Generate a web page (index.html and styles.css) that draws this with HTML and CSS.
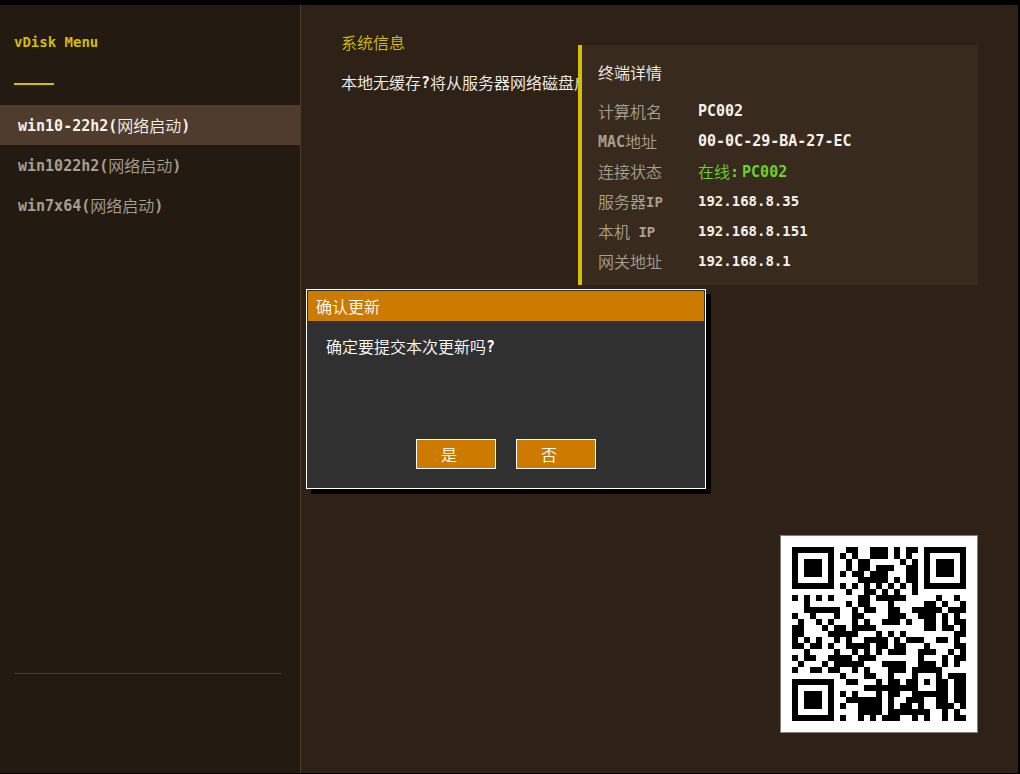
FILE: index.html
```html
<!DOCTYPE html>
<html lang="zh-CN">
<head>
<meta charset="utf-8">
<title>vDisk Menu</title>
<link rel="stylesheet" href="styles.css">
</head>
<body>
<div class="screen">
  <aside class="sidebar">
    <h1 class="brand latin narrow">vDisk Menu</h1>
    <div class="brand-rule"></div>
    <nav class="menu">
      <button class="menu-item active" type="button"><span class="latin">win10-22h2(</span>网络启动<span class="latin">)</span></button>
      <button class="menu-item" type="button"><span class="latin">win1022h2(</span>网络启动<span class="latin">)</span></button>
      <button class="menu-item" type="button"><span class="latin">win7x64(</span>网络启动<span class="latin">)</span></button>
    </nav>
    <hr class="divider">
  </aside>
  <main class="main">
    <div class="top">
      <section class="system">
        <h2 class="system-title">系统信息</h2>
        <p class="system-text">本地无缓存<span class="latin">?</span>将从服务器网络磁盘启动</p>
      </section>
      <section class="card">
        <h2 class="card-title">终端详情</h2>
        <dl class="details">
          <dt>计算机名</dt><dd class="latin">PC002</dd>
          <dt><span class="latin">MAC</span>地址</dt><dd class="latin">00-0C-29-BA-27-EC</dd>
          <dt>连接状态</dt><dd class="online">在线<span class="latin colon">:</span><span class="latin">PC002</span></dd>
          <dt>服务器<span class="latin narrow">IP</span></dt><dd class="latin narrow">192.168.8.35</dd>
          <dt>本机<span class="latin narrow"> IP</span></dt><dd class="latin narrow">192.168.8.151</dd>
          <dt>网关地址</dt><dd class="latin narrow">192.168.8.1</dd>
        </dl>
      </section>
    </div>
    <div class="qr">
      <svg id="qr" class="qr-code" viewBox="0 0 29 29" shape-rendering="crispEdges" role="img"></svg>
    </div>
  </main>
</div>
<dialog class="dialog" open aria-labelledby="dialog-title">
  <h2 class="dialog-title" id="dialog-title">确认更新</h2>
  <p class="dialog-text">确定要提交本次更新吗<span class="latin">?</span></p>
  <div class="dialog-actions">
    <button class="dialog-button" type="button">是</button>
    <button class="dialog-button" type="button">否</button>
  </div>
</dialog>
<script src="qr.js"></script>
</body>
</html>
```
FILE: styles.css
```css
* {
  box-sizing: border-box;
}

body {
  margin: 0;
  background: #000;
  color: #f5f2ec;
  font: 350 16px/20px "Noto Sans CJK SC", sans-serif;
}

h1, h2, p, dl, dd {
  margin: 0;
  font-size: 16px;
  font-weight: 350;
}

button {
  font: inherit;
  color: inherit;
}

.latin {
  font-family: "DejaVu Sans Mono", monospace;
  font-size: 15px;
  font-weight: 700;
  white-space: pre;
}

.latin.narrow {
  font-size: 14px;
}

span.latin {
  line-height: 1;
  vertical-align: 1px;
}

.screen {
  display: flex;
  min-height: 100vh;
  padding: 5px 2px 1px 0;
}

.sidebar {
  display: flex;
  flex-direction: column;
  flex: 0 0 301px;
  padding-top: 27px;
  background: #231a12;
  border-right: 1px solid #4f3c2c;
}

.brand {
  padding-left: 14px;
  color: #d6be00;
}

.brand-rule {
  width: 40px;
  height: 2px;
  margin: 31px 0 20px 14px;
  background: #d6be00;
}

.menu {
  display: flex;
  flex-direction: column;
}

.menu-item {
  height: 40px;
  padding: 0 18px;
  border: 0;
  background: none;
  color: #a8a08f;
  text-align: left;
}

.menu-item.active {
  margin-right: -1px;
  background: #4f3c2c;
  color: #f5f2ec;
}

.divider {
  width: auto;
  height: 1px;
  margin: auto 19px 99px 14px;
  border: 0;
  background: #4f3c2c;
}

.main {
  display: flex;
  flex: 1;
  flex-direction: column;
  justify-content: space-between;
  min-width: 0;
  padding: 27px 40px 40px;
  background: #2e2216;
}

.top {
  display: flex;
  align-items: flex-start;
}

.system {
  flex: 1;
  min-width: 0;
  white-space: nowrap;
}

.system-title {
  margin-bottom: 20px;
  color: #d6be00;
}

.card {
  position: relative;
  flex: 0 0 400px;
  margin-top: 13px;
  padding: 17px 16px 9px;
  border-left: 4px solid #d6be00;
  background: #382b1d;
}

.card-title {
  margin-bottom: 14px;
}

.details {
  display: grid;
  grid-template-columns: 100px 1fr;
  grid-auto-rows: 30px;
  line-height: 30px;
}

.details dt {
  color: #a8a08f;
}

.details .online {
  color: #6cd12d;
}

.colon {
  margin-right: 3px;
}

.qr {
  align-self: flex-end;
  padding: 11px;
  border: 1px solid #808080;
  background: #fff;
}

.qr-code {
  display: block;
  width: 174px;
  height: 174px;
}

.dialog {
  position: absolute;
  top: 289px;
  left: 306px;
  display: flex;
  flex-direction: column;
  width: 400px;
  min-height: 200px;
  margin: 0;
  padding: 1px;
  border: 1px solid #fff;
  background: #303030;
  box-shadow: 5px 5px 0 #000;
  color: #fff;
}

.dialog-title {
  padding: 5px 8px;
  background: #cc7a00;
}

.dialog-text {
  padding: 15px 18px;
}

.dialog-actions {
  display: flex;
  gap: 20px;
  margin-top: auto;
  padding: 0 108px 18px;
}

.dialog-button {
  width: 80px;
  height: 30px;
  padding: 0 24px;
  border: 1px solid #fff;
  background: #cc7a00;
  text-align: left;
}
```
FILE: qr.js
```js
// Draws a version 3, level M, mask 0 QR code of the management page's address.
(function () {
  const text = "http://192.168.8.35:7080/h5/index.html";
  const size = 29, dataLength = 44, eccLength = 26;

  const exp = [], log = [];
  for (let i = 0, x = 1; i < 255; i++) {
    exp[i] = x;
    log[x] = i;
    x <<= 1;
    if (x > 255) x ^= 0x11d;
  }
  const mul = (a, b) => (a && b ? exp[(log[a] + log[b]) % 255] : 0);

  let bits = "0100" + text.length.toString(2).padStart(8, "0");
  for (const c of text) bits += c.charCodeAt(0).toString(2).padStart(8, "0");
  bits += "0000";
  const data = bits.match(/.{8}/g).map((b) => parseInt(b, 2));
  for (let pad = 0xec; data.length < dataLength; pad ^= 0xec ^ 0x11) data.push(pad);

  let gen = [1];
  for (let i = 0; i < eccLength; i++) {
    const next = gen.concat(0);
    gen.forEach((g, j) => { next[j + 1] ^= mul(g, exp[i]); });
    gen = next;
  }
  const rest = data.concat(new Array(eccLength).fill(0));
  for (let i = 0; i < dataLength; i++) {
    const lead = rest[i];
    gen.forEach((g, j) => { rest[i + j] ^= mul(g, lead); });
  }
  const stream = data.concat(rest.slice(dataLength))
    .map((b) => b.toString(2).padStart(8, "0")).join("");

  const grid = Array.from({ length: size }, () => new Array(size).fill(null));
  const square = (cy, cx, reach, darkRings) => {
    for (let y = -reach; y <= reach; y++) {
      for (let x = -reach; x <= reach; x++) {
        if (grid[cy + y] && cx + x >= 0 && cx + x < size) {
          grid[cy + y][cx + x] = darkRings.includes(Math.max(Math.abs(x), Math.abs(y)));
        }
      }
    }
  };
  square(3, 3, 4, [0, 1, 3]);
  square(3, size - 4, 4, [0, 1, 3]);
  square(size - 4, 3, 4, [0, 1, 3]);
  square(22, 22, 2, [0, 2]);
  for (let i = 8; i < size - 8; i++) grid[6][i] = grid[i][6] = i % 2 === 0;

  const format = [..."101010000010010"].map((b) => b === "1");
  const first = [0, 1, 2, 3, 4, 5, 7, 8];
  first.forEach((c, i) => { grid[8][c] = format[i]; });
  [7, 5, 4, 3, 2, 1, 0].forEach((r, i) => { grid[r][8] = format[8 + i]; });
  for (let i = 0; i < 7; i++) grid[size - 1 - i][8] = format[i];
  for (let i = 7; i < 15; i++) grid[8][size - 15 + i] = format[i];
  grid[size - 8][8] = true;

  let n = 0, up = true;
  for (let right = size - 1; right > 0; right -= 2) {
    if (right === 6) right = 5;
    for (let k = 0; k < size; k++) {
      const y = up ? size - 1 - k : k;
      for (const x of [right, right - 1]) {
        if (grid[y][x] === null) {
          grid[y][x] = (stream[n++] === "1") !== ((x + y) % 2 === 0);
        }
      }
    }
    up = !up;
  }

  let d = "";
  grid.forEach((row, y) => row.forEach((dark, x) => {
    if (dark) d += `M${x} ${y}h1v1h-1z`;
  }));
  const path = document.createElementNS("http://www.w3.org/2000/svg", "path");
  path.setAttribute("d", d);
  document.getElementById("qr").append(path);
})();
```
